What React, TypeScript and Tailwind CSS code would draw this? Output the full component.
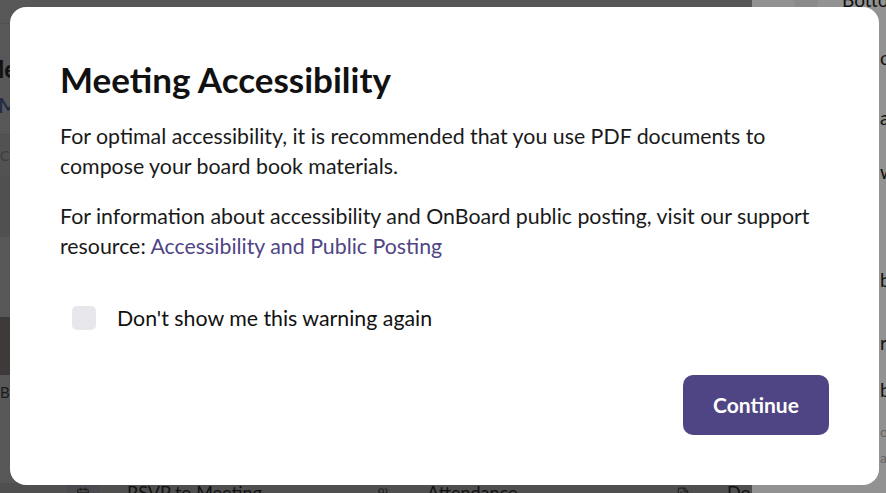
import { Calendar, Users, FileText } from 'lucide-react'

export default function App() {
  return (
    <div className="relative h-[493px] w-[886px] overflow-hidden bg-[#575757] font-['Lato',sans-serif]">
      {/* Dimmed page behind the dialog */}
      <div className="flex h-full">
        <div className="flex w-[752px] shrink-0 flex-col overflow-hidden">
          <div className="h-[24px] border-b border-[#4f4f4f]" />
          <div className="pt-[30px]">
            <div className="-ml-[18px] text-[24px] font-bold leading-[30px] text-[#111]">Meeting</div>
            <div className="-ml-[2px] mt-[6px] text-[22px] leading-[30px] text-[#1d2a45]">Meeting</div>
          </div>
          <div className="mt-[14px] border-y border-[#4f4f4f] bg-[#525252] py-[10px] text-[14px] text-[#3d3d3d]">Calendar</div>
          <div className="h-[60px] bg-[#505050]" />
          <div className="mt-[80px] flex">
            <div className="h-[58px] w-[40px] bg-[#3e3a3a]" />
          </div>
          <div className="mt-[6px] text-[15px] text-[#1a1a1a]">Bill</div>
          <div className="mt-auto flex h-[10px] items-start bg-[#4f4f4f] pl-[66px]">
            <div className="flex w-[300px] shrink-0 items-start gap-[27px]">
              <div className="flex h-[22px] w-[34px] items-start justify-center bg-[#4a4a4f] pt-[4px]">
                <Calendar className="h-[14px] w-[14px] text-[#222]" />
              </div>
              <span className="text-[18px] leading-[18px] text-[#111]">RSVP to Meeting</span>
            </div>
            <div className="flex w-[300px] shrink-0 items-start gap-[27px]">
              <div className="flex h-[22px] w-[34px] items-start justify-center bg-[#4f4f4f] pt-[4px]">
                <Users className="h-[14px] w-[14px] text-[#222]" />
              </div>
              <span className="text-[18px] leading-[18px] text-[#111]">Attendance</span>
            </div>
            <div className="flex w-[300px] shrink-0 items-start gap-[27px]">
              <div className="flex h-[22px] w-[34px] items-start justify-center bg-[#4f4f4f] pt-[4px]">
                <FileText className="h-[14px] w-[14px] text-[#222]" />
              </div>
              <span className="text-[18px] leading-[18px] text-[#111]">Documents</span>
            </div>
          </div>
        </div>
        <div className="flex flex-1 flex-col bg-[#929292] pl-[42px] text-[19px] leading-[20px] text-[#111]">
          <div className="flex h-[10px] items-start gap-[24px]">
            <div className="-mt-[16px] h-[30px] w-[24px] rounded-full bg-[#8a8a8a]" />
            <span className="-mt-[10px]">Bottom</span>
          </div>
          <div className="ml-[86px] mt-[38px]">content</div>
          <div className="ml-[86px] mt-[40px]">available</div>
          <div className="ml-[86px] mt-[34px]">will</div>
          <div className="ml-[86px] mt-[88px]">book</div>
          <div className="ml-[86px] mt-[43px]">resource</div>
          <div className="ml-[86px] mt-[27px]">book</div>
          <div className="ml-[86px] mt-[19px] text-[14px] leading-[26px] text-[#666]">
            <div>o</div>
            <div>a</div>
          </div>
        </div>
      </div>

      {/* Dialog */}
      <div className="absolute left-[10px] top-[7px] flex h-[478px] w-[869px] flex-col rounded-[16px] bg-white p-[50px] pt-[51px]">
        <h1 className="text-[35px] font-bold leading-[43px] text-[#111]">Meeting Accessibility</h1>
        <p className="mt-[20px] text-[21.33px] leading-[30px] text-[#1a1a1a]">
          For optimal accessibility, it is recommended that you use PDF documents to compose your board book materials.
        </p>
        <p className="mt-[20px] text-[21.33px] leading-[30px] text-[#1a1a1a]">
          For information about accessibility and OnBoard public posting, visit our support resource:{' '}
          <a className="text-[#4f4584]">Accessibility and Public Posting</a>
        </p>
        <label className="ml-[12px] mt-[42px] flex items-center gap-[21px]">
          <span className="h-[24px] w-[24px] rounded-[5px] bg-[#e7e7eb]" />
          <span className="text-[21.33px] leading-[30px] text-[#111]">Don't show me this warning again</span>
        </label>
        <div className="mt-auto flex justify-end">
          <button className="h-[60px] w-[146px] rounded-[10px] bg-[#4f4584] text-[21px] font-bold text-white">
            Continue
          </button>
        </div>
      </div>
    </div>
  )
}
